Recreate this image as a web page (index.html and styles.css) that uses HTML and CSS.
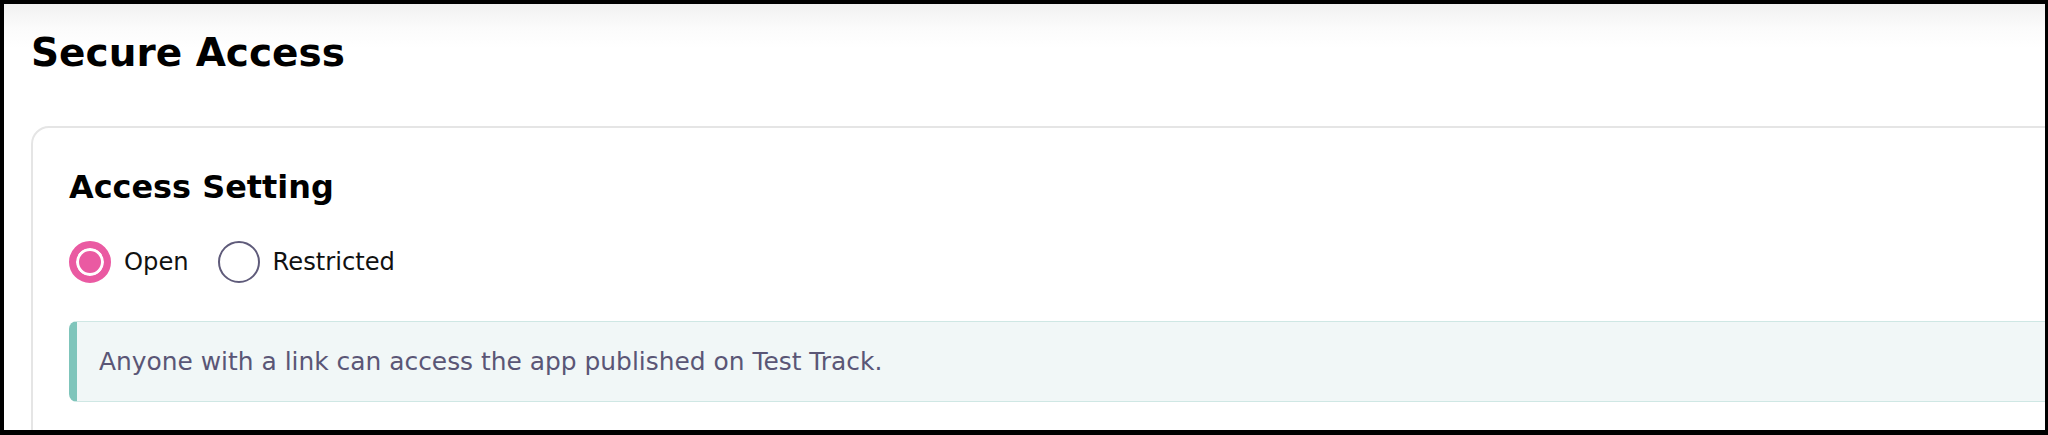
FILE: index.html
```html
<!DOCTYPE html>
<html lang="en">
<head>
<meta charset="utf-8">
<title>Secure Access</title>
<link rel="stylesheet" href="styles.css">
</head>
<body>
<div class="frame">
  <main class="page">
    <h1 class="page-title">Secure Access</h1>
    <section class="card">
      <h2 class="card-title">Access Setting</h2>
      <div class="radio-group">
        <label class="radio">
          <span class="radio-dot checked"></span>
          <span class="radio-label">Open</span>
        </label>
        <label class="radio">
          <span class="radio-dot"></span>
          <span class="radio-label">Restricted</span>
        </label>
      </div>
      <div class="info">Anyone with a link can access the app published on Test Track.</div>
    </section>
  </main>
</div>
</body>
</html>
```
FILE: styles.css
```css
html, body {
  margin: 0;
  padding: 0;
  background: #fff;
}
.frame {
  box-sizing: border-box;
  width: 2048px;
  height: 435px;
  border-style: solid;
  border-color: #000;
  border-width: 4px 3px 5px 4px;
  overflow: hidden;
  background: linear-gradient(#f1f1f1 0px, #fbfbfb 24px, #ffffff 44px);
  font-family: "DejaVu Sans", "Open Sans", sans-serif;
}
.page {
  padding: 25px 0 0 27px;
}
.page-title {
  margin: 0;
  font-weight: 700;
  font-size: 39px;
  line-height: 48px;
  color: #000;
}
.card {
  margin-top: 49px;
  margin-right: -120px;
  background: #fff;
  border: 2px solid #e5e5e5;
  border-radius: 18px;
  padding: 39px 36px 40px 36px;
  height: 400px;
}
.card-title {
  margin: 0;
  font-weight: 700;
  font-size: 31.9px;
  line-height: 40px;
  color: #000;
}
.radio-group {
  display: flex;
  align-items: center;
  gap: 29px;
  margin-top: 34px;
}
.radio {
  display: flex;
  align-items: center;
  gap: 13px;
}
.radio-dot {
  box-sizing: border-box;
  width: 42px;
  height: 42px;
  border-radius: 50%;
  border: 2px solid #5f5b7a;
  background: #fff;
}
.radio-dot.checked {
  border: 7px solid #ea5aa2;
  background: #ea5aa2;
  box-shadow: inset 0 0 0 3px #fff;
}
.radio-label {
  font-size: 24.2px;
  color: #111;
}
.info {
  margin-top: 38px;
  box-sizing: border-box;
  height: 81px;
  display: flex;
  align-items: center;
  padding-left: 22px;
  background: #f1f7f7;
  border: 1px solid #cfe7e4;
  border-left: 8px solid #7fc5bb;
  border-radius: 8px;
  font-size: 24.9px;
  color: #5a5676;
}
```
